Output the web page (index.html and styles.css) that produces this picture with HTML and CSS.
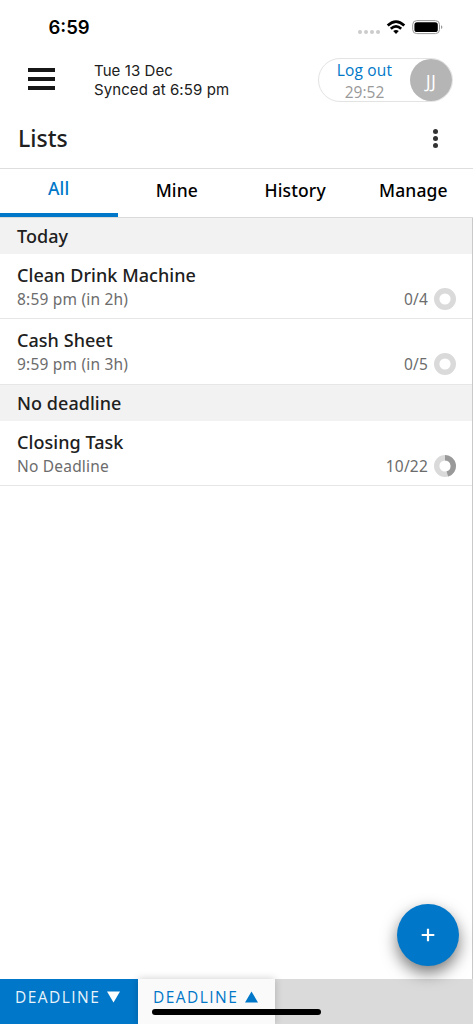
FILE: index.html
```html
<!DOCTYPE html>
<html lang="en">
<head>
<meta charset="utf-8">
<title>Lists</title>
<link rel="stylesheet" href="styles.css">
</head>
<body>
<div class="app">
  <div class="status">
    <span class="clock">6:59</span>
    <svg class="signals" width="88" height="20" viewBox="0 0 88 20">
      <g fill="#ccc"><circle cx="4" cy="14" r="2"/><circle cx="10" cy="14" r="2"/><circle cx="16" cy="14" r="2"/><circle cx="22" cy="14" r="2"/></g>
      <g fill="none" stroke="#000" stroke-width="2.7"><path d="M31.7 7.5Q40 -.4 48.3 7.5"/><path d="M34.8 10.7Q40 6 45.2 10.7"/></g>
      <path d="M37.2 13Q40 10.8 42.8 13L40 16z"/>
      <rect x="56.7" y="2.6" width="26.8" height="13" rx="4" fill="none" stroke="#999"/>
      <rect x="58.4" y="4.2" width="23.4" height="9.8" rx="2.6"/>
      <path d="M85 7.2q1.4.6 1.4 1.9t-1.4 1.9z" fill="#999"/>
    </svg>
  </div>
  <header class="header">
    <div class="burger"><i></i><i></i><i></i></div>
    <div class="sync"><div class="date">Tue 13 Dec</div><div class="synced">Synced at 6:59 pm</div></div>
    <div class="session">
      <div class="session-text"><div class="logout">Log out</div><div class="timer">29:52</div></div>
      <div class="avatar">JJ</div>
    </div>
  </header>
  <div class="title"><h1>Lists</h1><div class="more"><i></i><i></i><i></i></div></div>
  <nav class="tabs"><span class="tab active">All</span><span class="tab">Mine</span><span class="tab">History</span><span class="tab">Manage</span></nav>
  <main class="content">
    <h2 class="section">Today</h2>
    <div class="row">
      <div class="name">Clean Drink Machine</div>
      <div class="meta"><span class="due">8:59 pm (in 2h)</span><span class="count">0/4</span><svg class="ring" viewBox="0 0 22 22"><circle cx="11" cy="11" r="8.3"/></svg></div>
    </div>
    <div class="row">
      <div class="name">Cash Sheet</div>
      <div class="meta"><span class="due">9:59 pm (in 3h)</span><span class="count">0/5</span><svg class="ring" viewBox="0 0 22 22"><circle cx="11" cy="11" r="8.3"/></svg></div>
    </div>
    <h2 class="section">No deadline</h2>
    <div class="row">
      <div class="name">Closing Task</div>
      <div class="meta"><span class="due">No Deadline</span><span class="count">10/22</span><svg class="ring" viewBox="0 0 22 22"><circle cx="11" cy="11" r="8.3"/><path d="M11 2.7A8.3 8.3 0 0 1 13.34 18.96"/></svg></div>
    </div>
  </main>
  <footer class="sort">
    <div class="sort-tab selected"><span>DEADLINE</span><svg width="13" height="12" viewBox="0 0 13 12"><path d="M0 .5h13L6.5 11.5z"/></svg></div>
    <div class="sort-tab"><span>DEADLINE</span><svg width="13" height="12" viewBox="0 0 13 12"><path d="M0 11.5h13L6.5 .5z"/></svg></div>
  </footer>
  <div class="fab"><svg width="14" height="14" viewBox="0 0 14 14"><path d="M7 .7v12.6M.7 7h12.6"/></svg></div>
  <div class="home"></div>
</div>
</body>
</html>
```
FILE: styles.css
```css
* { box-sizing: border-box; }
body { margin: 0; background: #fff; color: #202020; font-family: "Noto Sans", "Open Sans", sans-serif; }
.app { position: relative; width: 473px; height: 1024px; display: flex; flex-direction: column; overflow: hidden; }
h1, h2 { margin: 0; }
.status { height: 53px; padding: 18px 29px 0 48.5px; display: flex; justify-content: space-between; font-family: Inter, sans-serif; }
.clock { font-size: 18.5px; font-weight: 600; line-height: 19px; color: #000; }
.header { height: 55px; padding: 5px 20px 0 28px; display: flex; }
.burger { width: 27px; padding-top: 10px; display: flex; flex-direction: column; gap: 5px; }
.burger i { height: 4px; background: #171717; }
.sync { flex: 1; padding: 3px 0 0 39px; font-family: Inter, sans-serif; font-size: 15px; line-height: 19px; letter-spacing: .08px; }
.session { width: 135px; height: 44px; border: 1px solid #e3e3e3; border-radius: 22px; display: flex; }
.session-text { flex: 1; text-align: center; font-family: "Open Sans", sans-serif; font-size: 15.5px; line-height: 22px; letter-spacing: .2px; }
.logout { color: #0077c8; }
.timer { color: #999; letter-spacing: 0; }
.avatar { width: 42px; height: 42px; border-radius: 50%; background: #b5b5b5; color: #fff; font-family: "Open Sans", sans-serif; font-size: 18.5px; font-weight: 400; line-height: 43px; letter-spacing: .3px; text-align: center; }
.title { height: 60px; padding: 0 34px 0 18px; display: flex; justify-content: space-between; align-items: center; }
h1 { font-size: 23px; font-weight: 500; line-height: 30px; }
.more { display: flex; flex-direction: column; gap: 2px; padding-right: 1px; }
.more i { width: 5px; height: 5px; border-radius: 50%; background: #333; }
.tabs { height: 50px; border-top: 1px solid #dedede; border-bottom: 1px solid #dadada; display: flex; }
.tab { flex: 1; height: 49px; padding-right: 1px; text-align: center; font-size: 17.5px; font-weight: 500; line-height: 43px; letter-spacing: .15px; color: #000; }
.active { height: 48px; line-height: 39px; color: #0077c8; border-bottom: 4px solid #0077c8; }
.content { height: 761px; border-right: 1px solid #c9c9c9; }
.section { height: 36px; padding-left: 17px; background: #f2f2f2; font-size: 18px; font-weight: 500; line-height: 37px; letter-spacing: .05px; }
.row { height: 65.25px; padding: 10px 16px 0 17px; border-bottom: 1.5px solid #e6e6e6; }
.name { font-size: 18px; font-weight: 500; line-height: 23px; letter-spacing: .05px; }
.meta { height: 24px; display: flex; align-items: center; font-size: 15.5px; line-height: 24px; color: #6c6c6c; letter-spacing: .2px; }
.due { flex: 1; }
.count { margin-right: 6px; }
.ring { width: 22px; height: 22px; fill: none; stroke: #dadada; stroke-width: 5.4; }
.ring path { stroke: #999; }
.sort { height: 45px; background: #dadada; display: flex; }
.sort-tab { width: 137px; height: 45px; padding: 0 0 9px 15px; display: flex; align-items: center; gap: 7px; font-family: "Open Sans", sans-serif; font-size: 15.5px; letter-spacing: 1.45px; color: #0077c8; background: #fafafa; box-shadow: 0 0 8px #0003; }
.sort-tab svg { fill: #0077c8; }
.selected { width: 138px; background: #0077c8; color: #e8f3fb; box-shadow: none; }
.selected svg { fill: #fff; }
.fab { position: absolute; left: 397px; top: 904px; width: 62px; height: 62px; border-radius: 50%; background: #0077c8; display: flex; align-items: center; justify-content: center; box-shadow: 0 7px 16px #0008; }
.fab svg { fill: none; stroke: #fff; stroke-width: 2.2; }
.home { position: absolute; left: 152px; top: 1009px; width: 169px; height: 6px; border-radius: 3px; background: #000; }
```
